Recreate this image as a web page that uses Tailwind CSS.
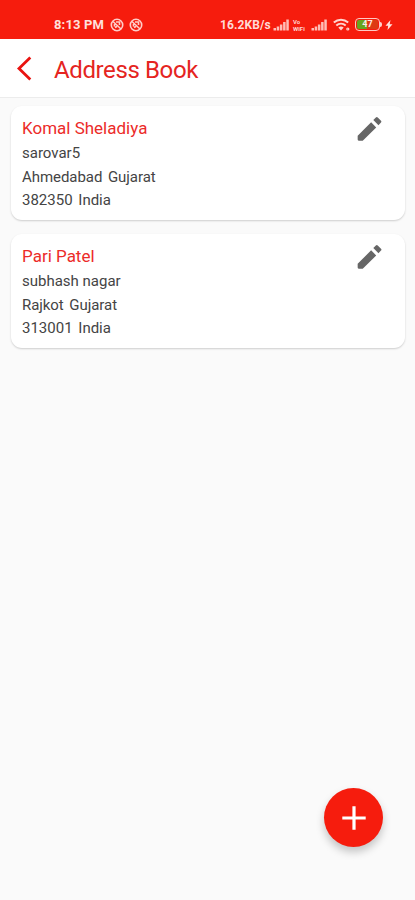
<!DOCTYPE html>
<html lang="en">
<head>
<meta charset="utf-8">
<title>Address Book</title>
<script src="https://cdn.jsdelivr.net/npm/@tailwindcss/browser@4"></script>
</head>
<body class="bg-[#fafafa] font-[Roboto,sans-serif]">
<div class="relative flex h-[900px] w-[415px] flex-col overflow-hidden">
  <div class="flex h-[39px] shrink-0 items-center bg-[#f61c0d] pt-[10px] pl-[54px] text-white">
    <span class="w-[56px] text-[13px] leading-4 font-bold tracking-[0.15px] whitespace-nowrap text-[#ffe0dc]">8:13 PM</span>
    <svg class="h-[14px] w-[33px] shrink-0" viewBox="0 0 33 14" fill="none" stroke="#ffcdc8" stroke-width="1.6">
      <circle cx="7" cy="7" r="5.7"/><path d="M3 3.500l8 7.500M4.500 8.500V6M6 4h3.500v3M5 9.500l2-1"/>
      <circle cx="26" cy="7" r="5.700"/><path d="M22 3.500l8 7.500M23.500 8.500V6M25 4h3.500v3M24 9.500l2-1"/>
    </svg>
    <span class="ml-[77px] w-[53px] text-[12px] leading-4 font-bold tracking-[0.1px] whitespace-nowrap text-[#ffdad6]">16.2KB/s</span>
    <svg class="h-[14px] w-[17px] shrink-0" viewBox="0 0 17 14" fill="#ffbcb6"><path d="M.5 10H3v2.500H.5zM3.700 8.500h2.500v4H3.700zM6.900 6.500h2.500v6H6.900zM10.100 4h2.500v8.500h-2.500zM13.300 1.500h2.500v11h-2.500z"/></svg>
    <span class="ml-[3px] flex w-[18px] flex-col text-[6px] leading-[7px] font-bold text-[#ffd5d0]"><span>Vo</span><span>WiFi</span></span>
    <svg class="h-[14px] w-[17px] shrink-0" viewBox="0 0 17 14" fill="#ffbcb6"><path d="M.5 10H3v2.500H.5zM3.700 8.500h2.500v4H3.700zM6.900 6.500h2.500v6H6.900zM10.100 4h2.500v8.500h-2.500zM13.300 1.500h2.500v11h-2.500z"/></svg>
    <svg class="ml-[5px] h-[14px] w-[18px] shrink-0" viewBox="0 0 18 14" fill="none" stroke="#ffd5d0" stroke-width="2"><path d="M.8 4.600c4.200-3.700 10.200-3.700 14.400 0M3.300 7.500c2.700-2.300 6.700-2.300 9.400 0"/><path d="M5.300 9.500c1.700-1.400 3.700-1.400 5.400 0L8 12.500z" fill="#ffd5d0" stroke="none"/><circle cx="14.800" cy="11" r="1" stroke-width="1.200"/></svg>
    <div class="ml-[4px] flex h-[13px] w-[25px] shrink-0 items-center rounded-[4px] border-[1.5px] border-[#ffc9c3] p-px">
      <div class="flex h-full w-full items-center justify-center rounded-[2px] bg-linear-to-r from-[#65a51f] from-45% to-[#dd3b12] to-50% text-[9px] leading-none font-bold text-[#ffe9e6]">47</div>
    </div>
    <div class="h-[5px] w-[2px] shrink-0 rounded-r bg-[#ffd0ca]"></div>
    <svg class="ml-[3px] h-[12px] w-[8px] shrink-0" viewBox="0 0 8 12" fill="#ffe3df"><path d="M5.500 1L.5 6.700h2.700L2.500 11l5-5.800H4.700z"/></svg>
  </div>
  <header class="flex h-[59px] shrink-0 items-center border-b border-[#ececec] bg-white pl-[16px]">
    <svg class="h-[26px] w-[18px]" viewBox="0 0 18 26" fill="none" stroke="#e91310" stroke-width="2.800"><path d="M14.300 2.500L3 13.500l11.300 11"/></svg>
    <h1 class="ml-[20px] pt-[3px] text-[24px] leading-8 tracking-[-0.38px] text-[#e52421]">Address Book</h1>
  </header>
  <main class="flex flex-col gap-[14px] pt-[8px] pr-[10px] pl-[11px]">
    <section class="flex h-[114px] justify-between rounded-[11px] bg-white pt-[10px] pl-[11px] shadow-[0_1px_2px_rgba(0,0,0,0.18)]">
      <div class="text-[15px] leading-[23.600px] text-[#444]">
        <h2 class="h-[26px] text-[17px] leading-[25px] text-[#ec2b29]">Komal Sheladiya</h2>
        <p>sarovar5</p>
        <p class="tracking-[-0.06px] [word-spacing:2px]">Ahmedabad Gujarat</p>
        <p class="[word-spacing:2px]">382350 India</p>
      </div>
      <svg class="-mt-[3px] mr-[20px] h-[32px] w-[32px]" viewBox="0 0 24 24" fill="#666"><path d="M3.500 17.100v2.700q0 1.100 1.100 1.100h2.700L17.400 10.800l-3.800-3.800zM21 7.200a1 1 0 0 0 0-1.410l-2.450-2.450a1 1 0 0 0-1.410 0l-1.900 1.900 3.860 3.860z"/></svg>
    </section>
    <section class="flex h-[114px] justify-between rounded-[11px] bg-white pt-[10px] pl-[11px] shadow-[0_1px_2px_rgba(0,0,0,0.18)]">
      <div class="text-[15px] leading-[23.600px] text-[#444]">
        <h2 class="h-[26px] text-[17px] leading-[25px] text-[#ec2b29]">Pari Patel</h2>
        <p>subhash nagar</p>
        <p class="tracking-[-0.06px] [word-spacing:2px]">Rajkot Gujarat</p>
        <p class="[word-spacing:2px]">313001 India</p>
      </div>
      <svg class="-mt-[3px] mr-[20px] h-[32px] w-[32px]" viewBox="0 0 24 24" fill="#666"><path d="M3.500 17.100v2.700q0 1.100 1.100 1.100h2.700L17.400 10.800l-3.800-3.800zM21 7.200a1 1 0 0 0 0-1.410l-2.450-2.450a1 1 0 0 0-1.410 0l-1.900 1.900 3.860 3.860z"/></svg>
    </section>
  </main>
  <button aria-label="Add address" class="absolute top-[788px] left-[324px] flex size-[59px] items-center justify-center rounded-full bg-[#f61c0d] shadow-[0_5px_8px_rgba(0,0,0,0.22)]">
    <svg class="size-[24px]" viewBox="0 0 24 24" stroke="#fff" stroke-width="3.200"><path d="M12 .3v23.400M.3 12h23.400"/></svg>
  </button>
</div>
</body>
</html>
